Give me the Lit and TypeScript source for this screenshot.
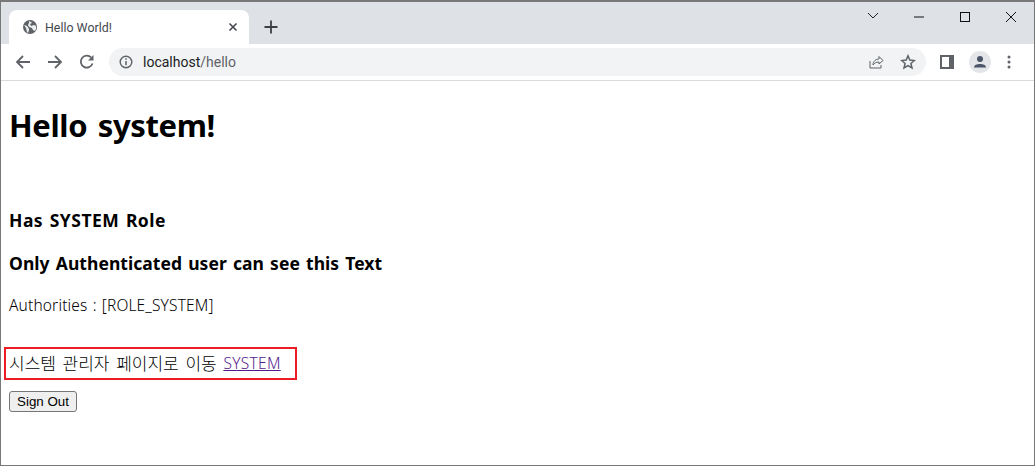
import { LitElement, html, css } from "lit";
import { customElement } from "lit/decorators.js";

@customElement("app-root")
export class AppRoot extends LitElement {
  static styles = css`
    :host { display: block; width: 1035px; height: 466px; box-sizing: border-box; border: 1px solid #787878; border-top-width: 2px; background: #fff; overflow: hidden; font-family: "Noto Sans", "Noto Sans CJK KR", sans-serif; color: #000; }
    .strip { height: 42px; background: #dee1e6; display: flex; align-items: flex-end; padding-left: 8px; position: relative; }
    .tab { width: 240px; height: 34px; background: #fff; border-radius: 8px 8px 0 0; display: flex; align-items: center; box-sizing: border-box; padding: 0 11px 0 13px; font: 12.4px "Roboto", sans-serif; color: #45494e; gap: 7px; }
    .tab .title { flex: 1; }
    .plus { margin-left: 13px; margin-bottom: 8px; width: 18px; height: 18px; }
    .win { position: absolute; top: -1px; right: 0; height: 32px; display: flex; }
    .win svg { display: block; }
    .bar { height: 36px; background: #fff; border-bottom: 1px solid #dadce0; display: flex; align-items: center; }
    .nav { display: flex; margin-left: 14px; gap: 16px; width: 94px; }
    .omni { width: 817px; height: 28px; background: #f1f3f4; border-radius: 14px; display: flex; align-items: center; box-sizing: border-box; padding: 0 10px; font: 14px "Roboto", sans-serif; color: #5f6368; }
    .omni .host { color: #202124; }
    .url { margin-left: 10px; flex: 1; }
    .star { margin-left: 16px; }
    .panel { margin-left: 14px; }
    .avatar { margin-left: 15px; }
    .dots { margin-left: 16px; }
    .page { padding: 0 8px; }
    h1 { font-size: 31px; font-weight: 700; line-height: 44px; margin: 22px 0 0; word-spacing: 3px; letter-spacing: -.38px; }
    h3 { font-size: 17.5px; font-weight: 700; line-height: 24px; margin: 0; word-spacing: 1.5px; }
    .r1 { margin-top: 61px; letter-spacing: .5px; }
    .r2 { margin-top: 19px; letter-spacing: .05px; }
    p { font-size: 15.5px; font-weight: 300; line-height: 22px; margin: 19px 0 0; word-spacing: 1px; letter-spacing: .16px; }
    .box { width: 293px; height: 33px; box-sizing: border-box; border: 2px solid #ed1c24; margin: 31px 0 0 -5px; padding: 0 0 2px 3px; display: flex; align-items: center; font-size: 15.5px; font-weight: 300; white-space: pre; }
    .ko { font-size: 17px; word-spacing: 2.25px; }
    a { color: #551a8b; text-decoration: underline; letter-spacing: .3px; }
    button { display: block; margin-top: 11px; font: 13.33px "Liberation Sans", sans-serif; height: 21px; width: 68px; padding: 0; background: #efefef; border: 1px solid #767676; border-radius: 3px; color: #000; }
  `;
  render() {
    return html`
      <div class="strip">
        <div class="tab">
          <svg width="16" height="16" viewBox="0 0 16 16"><circle cx="8" cy="8" r="7" fill="#5f6368"/><path d="M2 6l3 1 2 3v1l-1 3-1-1-1-4zM7 2l2 1 1 1-2 1 1 2 3-1 2 1 0 3-1 2-2-1-1-2-3-1-1-2 1-2z" fill="#fff" opacity=".9"/></svg>
          <span class="title">Hello World!</span>
          <svg width="10" height="10" viewBox="0 0 10 10"><path d="M1.500 1.500l7 7M8.500 1.500l-7 7" stroke="#45494e" stroke-width="1.600"/></svg>
        </div>
        <svg class="plus" viewBox="0 0 18 18"><path d="M9 2.500v13M2.500 9h13" stroke="#3c4043" stroke-width="1.800"/></svg>
        <div class="win">
          <svg width="46" height="32" viewBox="0 0 46 32"><path d="M18 12l5 5 5-5" fill="none" stroke="#222" stroke-width="1"/></svg>
          <svg width="46" height="32" viewBox="0 0 46 32"><path d="M18 16h10" stroke="#111" stroke-width="1"/></svg>
          <svg width="46" height="32" viewBox="0 0 46 32"><rect x="18.500" y="11.500" width="9" height="9" fill="none" stroke="#111"/></svg>
          <svg width="46" height="32" viewBox="0 0 46 32"><path d="M18 11l10 10M28 11l-10 10" stroke="#111" stroke-width="1"/></svg>
        </div>
      </div>
      <div class="bar">
        <div class="nav">
          <svg width="16" height="16" viewBox="0 0 16 16"><path d="M15 8H2M8 2L2 8l6 6" fill="none" stroke="#5f6368" stroke-width="1.800"/></svg>
          <svg width="16" height="16" viewBox="0 0 16 16"><path d="M1 8h13M8 2l6 6-6 6" fill="none" stroke="#5f6368" stroke-width="1.800"/></svg>
          <svg width="16" height="16" viewBox="0 0 16 16"><path d="M13.500 9.500A6 6 0 1 1 12.200 3.500" fill="none" stroke="#5f6368" stroke-width="1.800"/><path d="M14.500 1v5.500H9z" fill="#5f6368"/></svg>
        </div>
        <div class="omni">
          <svg width="14" height="14" viewBox="0 0 14 14"><circle cx="7" cy="7" r="5.800" fill="none" stroke="#5f6368" stroke-width="1.400"/><path d="M7 6v4.200" stroke="#5f6368" stroke-width="1.500"/><path d="M7 3.300v1.500" stroke="#5f6368" stroke-width="1.500"/></svg>
          <span class="url"><span class="host">localhost</span>/hello</span>
          <svg width="16" height="16" viewBox="0 0 16 16"><path d="M2 7v7h11v-3" fill="none" stroke="#5f6368" stroke-width="1"/><path d="M5 11c0-4 3-6 6-6V2.500L15 6.500l-4 3.500V8c-3 0-4.500 1-6 3z" fill="none" stroke="#5f6368" stroke-width="1"/></svg>
          <svg class="star" width="16" height="16" viewBox="0 0 16 16"><path d="M8 1.800l1.800 4.300 4.600.4-3.500 3 1.100 4.500L8 11.600 4 14l1.100-4.500-3.500-3 4.600-.4z" fill="none" stroke="#5f6368" stroke-width="1.500"/></svg>
        </div>
        <svg class="panel" width="14" height="14" viewBox="0 0 14 14"><rect width="14" height="14" fill="#5f6368"/><rect x="2" y="2" width="7" height="10" fill="#fff"/></svg>
        <svg class="avatar" width="22" height="22" viewBox="0 0 22 22"><circle cx="11" cy="11" r="11" fill="#e3e5e8"/><circle cx="11" cy="8" r="3" fill="#4a5568"/><path d="M5 16.500c0-2.500 3-3.500 6-3.500s6 1 6 3.500z" fill="#4a5568"/></svg>
        <svg class="dots" width="4" height="14" viewBox="0 0 4 14"><circle cx="2" cy="2" r="1.500" fill="#5f6368"/><circle cx="2" cy="7" r="1.500" fill="#5f6368"/><circle cx="2" cy="12" r="1.500" fill="#5f6368"/></svg>
      </div>
      <div class="page">
        <h1>Hello system!</h1>
        <h3 class="r1">Has SYSTEM Role</h3>
        <h3 class="r2">Only Authenticated user can see this Text</h3>
        <p>Authorities : [ROLE_SYSTEM]</p>
        <div class="box"><span class="ko">시스템 관리자 페이지로 이동 </span><a href="#">SYSTEM</a></div>
        <button>Sign Out</button>
      </div>
    `;
  }
}
